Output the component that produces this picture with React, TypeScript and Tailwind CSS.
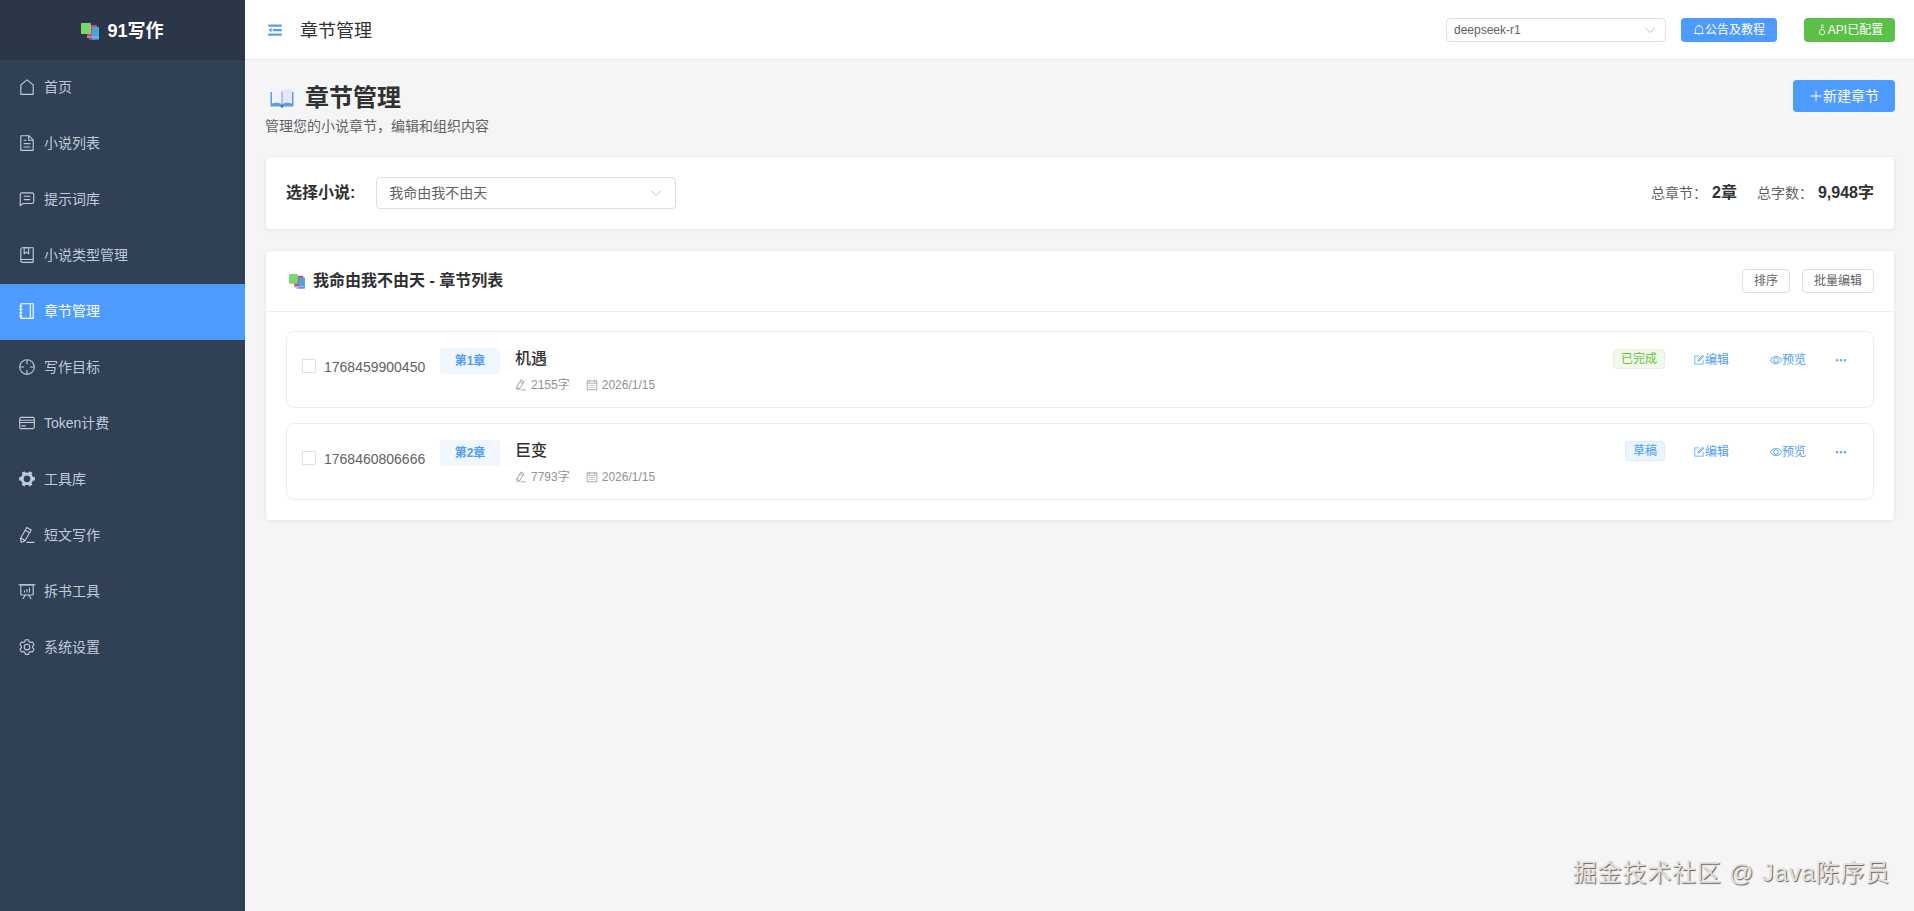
import { FC, ReactNode } from "react";

const FONT = "font-['Liberation_Sans','Noto_Sans_CJK_SC',sans-serif]";

const paths: { [key: string]: string[] } = {
  house: [
    "M192 413.952V896h640V413.952L512 147.328zM139.52 374.4l352-293.312a32 32 0 0 1 40.96 0l352 293.312A32 32 0 0 1 896 398.976V928a32 32 0 0 1-32 32H160a32 32 0 0 1-32-32V398.976a32 32 0 0 1 11.52-24.576",
  ],
  document: [
    "M832 384H576V128H192v768h640zm-26.496-64L640 154.496V320zM160 64h480l256 256v608a32 32 0 0 1-32 32H160a32 32 0 0 1-32-32V96a32 32 0 0 1 32-32m160 448h384v64H320zm0-192h160v64H320zm0 384h384v64H320z",
  ],
  chat: [
    "M160 826.88 273.536 736H800a64 64 0 0 0 64-64V256a64 64 0 0 0-64-64H224a64 64 0 0 0-64 64zM296 800 147.968 918.4A32 32 0 0 1 96 893.44V256a128 128 0 0 1 128-128h576a128 128 0 0 1 128 128v416a128 128 0 0 1-128 128z",
    "M352 512h320q32 0 32 32t-32 32H352q-32 0-32-32t32-32M352 320h320q32 0 32 32t-32 32H352q-32 0-32-32t32-32",
  ],
  collection: [
    "M192 736h640V128H256a64 64 0 0 0-64 64zm64-672h608a32 32 0 0 1 32 32v672a32 32 0 0 1-32 32H160l-32 57.536V192A128 128 0 0 1 256 64",
    "M240 800a48 48 0 1 0 0 96h592v-96zm0-64h656v160a64 64 0 0 1-64 64H240a112 112 0 0 1 0-224m144-608v250.88l96-76.8 96 76.8V128zm-64-64h320v381.44a32 32 0 0 1-51.968 24.96L480 384l-108.032 86.4A32 32 0 0 1 320 445.44z",
  ],
  notebook: [
    "M192 128v768h640V128zm-32-64h704a32 32 0 0 1 32 32v832a32 32 0 0 1-32 32H160a32 32 0 0 1-32-32V96a32 32 0 0 1 32-32",
    "M672 128h64v768h-64zM96 192h128q32 0 32 32t-32 32H96q-32 0-32-32t32-32m0 192h128q32 0 32 32t-32 32H96q-32 0-32-32t32-32m0 192h128q32 0 32 32t-32 32H96q-32 0-32-32t32-32m0 192h128q32 0 32 32t-32 32H96q-32 0-32-32t32-32",
  ],
  aim: [
    "M512 896a384 384 0 1 0 0-768 384 384 0 0 0 0 768m0 64a448 448 0 1 1 0-896 448 448 0 0 1 0 896",
    "M512 96a32 32 0 0 1 32 32v192a32 32 0 0 1-64 0V128a32 32 0 0 1 32-32m0 576a32 32 0 0 1 32 32v192a32 32 0 1 1-64 0V704a32 32 0 0 1 32-32M96 512a32 32 0 0 1 32-32h192a32 32 0 0 1 0 64H128a32 32 0 0 1-32-32m576 0a32 32 0 0 1 32-32h192a32 32 0 1 1 0 64H704a32 32 0 0 1-32-32",
  ],
  card: [
    "M896 324.096c0-42.368-2.496-55.296-9.536-68.48a52.352 52.352 0 0 0-22.144-22.08c-13.12-7.04-26.048-9.536-68.416-9.536H228.096c-42.368 0-55.296 2.496-68.48 9.536a52.352 52.352 0 0 0-22.08 22.144c-7.04 13.12-9.536 26.048-9.536 68.416v375.808c0 42.368 2.496 55.296 9.536 68.48a52.352 52.352 0 0 0 22.144 22.08c13.12 7.04 26.048 9.536 68.416 9.536h567.808c42.368 0 55.296-2.496 68.48-9.536a52.352 52.352 0 0 0 22.08-22.144c7.04-13.12 9.536-26.048 9.536-68.416zm64 0v375.808c0 57.088-5.952 77.76-17.088 98.56-11.136 20.928-27.52 37.312-48.384 48.448S852.928 864 795.968 864H228.032c-57.088 0-77.76-5.952-98.56-17.088a116.288 116.288 0 0 1-48.448-48.384c-11.136-20.864-17.024-41.6-17.024-98.56V324.032c0-57.088 5.952-77.76 17.088-98.56 11.136-20.928 27.52-37.312 48.384-48.448s41.6-17.024 98.56-17.024H795.84c57.088 0 77.76 5.952 98.56 17.088 20.928 11.136 37.312 27.52 48.448 48.384s17.088 41.6 17.088 98.56z",
    "M64 320h896v64H64zm0 128h896v64H64zm128 192h256v64H192z",
  ],
  tools: [
    "M764.416 254.72a351.68 351.68 0 0 1 86.336 149.184H960v192.064H850.752a351.68 351.68 0 0 1-86.336 149.312l54.72 94.72-166.272 96-54.592-94.72a352.64 352.64 0 0 1-172.48 0L371.136 936l-166.272-96 54.72-94.72a351.68 351.68 0 0 1-86.336-149.312H64v-192h109.248a351.68 351.68 0 0 1 86.336-149.312L204.8 160l166.208-96h.192l54.656 94.592a352.64 352.64 0 0 1 172.48 0L652.8 64h.128L819.2 160l-54.72 94.72zM704 499.968a192 192 0 1 0-384 0 192 192 0 0 0 384 0",
  ],
  pen: [
    "m199.04 672.64 193.984 112 224-387.968-193.92-112-224 388.032zm-23.872 60.16 32.896 148.288 144.896-45.696zM455.04 229.248l193.92 112 56.704-98.112-193.984-112zM104.32 708.8l384-665.024 304.768 175.936L409.152 884.8h.064l-248.448 78.336zm384 254.272v-64h448v64h-448z",
  ],
  board: [
    "M32 128h960v64H32z",
    "M192 192v512h640V192zm-64-64h768v576a64 64 0 0 1-64 64H192a64 64 0 0 1-64-64z",
    "M322.176 960H248.32l144.64-250.56 55.424 32zm453.888 0h-73.856L576 741.44l55.424-32z",
    "M340 470h60v130h-60zm140-70h60v200h-60zm140-70h60v270h-60z",
  ],
  setting: [
    "M600.704 64a32 32 0 0 1 30.464 22.208l35.2 109.376c14.784 7.232 28.928 15.36 42.432 24.512l112.384-24.192a32 32 0 0 1 34.432 15.36L944.32 364.8a32 32 0 0 1-4.032 37.504l-77.12 85.12a357.12 357.12 0 0 1 0 49.024l77.12 85.248a32 32 0 0 1 4.032 37.504l-88.704 153.6a32 32 0 0 1-34.432 15.296L708.8 803.904c-13.44 9.088-27.648 17.28-42.368 24.512l-35.264 109.376A32 32 0 0 1 600.704 960H423.296a32 32 0 0 1-30.464-22.208L357.696 828.48a351.616 351.616 0 0 1-42.56-24.64l-112.32 24.256a32 32 0 0 1-34.432-15.36L79.68 659.2a32 32 0 0 1 4.032-37.504l77.12-85.248a357.12 357.12 0 0 1 0-48.896l-77.12-85.248A32 32 0 0 1 79.68 364.8l88.704-153.6a32 32 0 0 1 34.432-15.296l112.32 24.256c13.568-9.152 27.776-17.408 42.56-24.64l35.2-109.312A32 32 0 0 1 423.232 64H600.64zm-23.424 64H446.72l-36.352 113.088-24.512 11.968a294.113 294.113 0 0 0-34.816 20.096l-22.656 15.36-116.224-25.088-65.28 113.152 79.68 88.192-1.92 27.136a293.12 293.12 0 0 0 0 40.192l1.92 27.136-79.808 88.192 65.344 113.152 116.224-25.024 22.656 15.296a294.113 294.113 0 0 0 34.816 20.096l24.512 11.968L446.72 896h130.688l36.48-113.152 24.448-11.904a288.282 288.282 0 0 0 34.752-20.096l22.592-15.296 116.288 25.024 65.28-113.152-79.744-88.192 1.92-27.136a293.12 293.12 0 0 0 0-40.256l-1.92-27.136 79.808-88.128-65.344-113.152-116.288 24.96-22.592-15.232a287.616 287.616 0 0 0-34.752-20.096l-24.448-11.904L577.344 128zM512 320a192 192 0 1 1 0 384 192 192 0 0 1 0-384m0 64a128 128 0 1 0 0 256 128 128 0 0 0 0-256",
  ],
  calendar: [
    "M128 384v512h768V192H768v32a32 32 0 1 1-64 0v-32H320v32a32 32 0 0 1-64 0v-32H128v128h768v64zm192-256h384V96a32 32 0 1 1 64 0v32h160a32 32 0 0 1 32 32v768a32 32 0 0 1-32 32H96a32 32 0 0 1-32-32V160a32 32 0 0 1 32-32h160V96a32 32 0 0 1 64 0zm-32 384h64a32 32 0 0 1 0 64h-64a32 32 0 0 1 0-64m0 192h64a32 32 0 1 1 0 64h-64a32 32 0 1 1 0-64m192-192h64a32 32 0 0 1 0 64h-64a32 32 0 0 1 0-64m0 192h64a32 32 0 1 1 0 64h-64a32 32 0 1 1 0-64m192-192h64a32 32 0 1 1 0 64h-64a32 32 0 1 1 0-64m0 192h64a32 32 0 1 1 0 64h-64a32 32 0 1 1 0-64",
  ],
  bell: [
    "M512 64a64 64 0 0 1 64 64v64H448v-64a64 64 0 0 1 64-64",
    "M256 768h512V448a256 256 0 1 0-512 0zm256-640a320 320 0 0 1 320 320v384H192V448a320 320 0 0 1 320-320",
    "M96 768h832q32 0 32 32t-32 32H96q-32 0-32-32t32-32m352 128h128a64 64 0 0 1-128 0",
  ],
  key: [
    "M448 456.064V96a32 32 0 0 1 32-32.064L672 64a32 32 0 0 1 0 64H512v128h160a32 32 0 0 1 0 64H512v128a256 256 0 1 1-64 8.064M512 896a192 192 0 1 0 0-384 192 192 0 0 0 0 384",
  ],
  plus: [
    "M480 480V128a32 32 0 0 1 64 0v352h352a32 32 0 0 1 0 64H544v352a32 32 0 1 1-64 0V544H128a32 32 0 0 1 0-64z",
  ],
  edit: [
    "M832 512a32 32 0 1 1 64 0v352a32 32 0 0 1-32 32H160a32 32 0 0 1-32-32V160a32 32 0 0 1 32-32h352a32 32 0 0 1 0 64H192v640h640z",
    "m469.952 554.24 52.8-7.552L847.104 222.4a32 32 0 1 0-45.248-45.248L477.44 501.44l-7.552 52.8zm422.4-422.4a96 96 0 0 1 0 135.808l-331.84 331.84a32 32 0 0 1-18.112 9.088L436.8 623.68a32 32 0 0 1-36.224-36.224l15.104-105.6a32 32 0 0 1 9.024-18.112l331.904-331.84a96 96 0 0 1 135.744 0z",
  ],
  view: [
    "M512 160c320 0 512 352 512 352S832 864 512 864 0 512 0 512s192-352 512-352m0 64c-225.28 0-384.128 208.064-436.8 288 52.608 79.872 211.456 288 436.8 288 225.28 0 384.128-208.064 436.8-288-52.608-79.872-211.456-288-436.8-288zm0 64a224 224 0 1 1 0 448 224 224 0 0 1 0-448m0 64a160.192 160.192 0 0 0-160 160c0 88.192 71.744 160 160 160s160-71.808 160-160-71.744-160-160-160",
  ],
  more: [
    "M176 416a112 112 0 1 1 0 224 112 112 0 0 1 0-224m336 0a112 112 0 1 1 0 224 112 112 0 0 1 0-224m336 0a112 112 0 1 1 0 224 112 112 0 0 1 0-224",
  ],
  arrowDown: [
    "M831.872 340.864 512 652.672 192.128 340.864a30.592 30.592 0 0 0-42.752 0 29.12 29.12 0 0 0 0 41.6L489.664 714.24a32 32 0 0 0 44.672 0l340.288-331.712a29.12 29.12 0 0 0 0-41.728 30.592 30.592 0 0 0-42.752 0z",
  ],
  fold: [
    "M896 192H128v128h768zm0 256H384v128h512zm0 256H128v128h768zM320 384 128 512l192 128z",
  ],
};

const Icon: FC<{ name: string; className?: string }> = ({ name, className }) => (
  <svg viewBox="0 0 1024 1024" className={`flex-none ${className ?? ""}`} fill="currentColor">
    {paths[name].map((d, i) => (
      <path key={i} d={d} />
    ))}
  </svg>
);

// the stack-of-books mark used in the logo and the list heading
const BooksMark: FC<{ className?: string }> = ({ className }) => (
  <svg viewBox="0 0 18 17" className={className}>
    <rect x="6" y="2" width="10" height="13" fill="#d8407c" />
    <rect x="11" y="4" width="7" height="12.5" fill="#45a5dd" />
    <rect x="6" y="13.5" width="12" height="1" fill="#a9b6e6" />
    <rect x="8" y="15.5" width="9" height="1" fill="#7f8fd8" />
    <rect x="0" y="0" width="10" height="11" rx="0.6" fill="#7ad66f" />
  </svg>
);

const OpenBook: FC<{ className?: string }> = ({ className }) => (
  <svg viewBox="0 0 24 20" className={className}>
    <path d="M0.5 4 H23.5 V18.5 H0.5 Z" fill="#5a9fe2" />
    <path d="M2 1.5 C5.5 0.5 9 0.5 11.5 2.5 V16 C9 14.5 5.5 14.5 2 15.5 Z" fill="#f1f2fc" />
    <path d="M22 1.5 C18.5 0.5 15 0.5 12.5 2.5 V16 C15 14.5 18.5 14.5 22 15.5 Z" fill="#e6e8f9" />
    <path d="M11.5 2.5 H12.5 V16.5 H11.5 Z" fill="#b9c1e0" />
    <rect x="10.8" y="17" width="2.4" height="2.5" fill="#2f6fb5" />
  </svg>
);

const navItems = [
  { icon: "house", label: "首页" },
  { icon: "document", label: "小说列表" },
  { icon: "chat", label: "提示词库" },
  { icon: "collection", label: "小说类型管理" },
  { icon: "notebook", label: "章节管理", active: true },
  { icon: "aim", label: "写作目标" },
  { icon: "card", label: "Token计费" },
  { icon: "tools", label: "工具库" },
  { icon: "pen", label: "短文写作" },
  { icon: "board", label: "拆书工具" },
  { icon: "setting", label: "系统设置" },
];

const chapters = [
  {
    id: "1768459900450",
    no: "第1章",
    title: "机遇",
    words: "2155字",
    date: "2026/1/15",
    status: "已完成",
    statusClass: "border-[#e1f3d8] bg-[#f0f9eb] text-[#67c23a]",
  },
  {
    id: "1768460806666",
    no: "第2章",
    title: "巨变",
    words: "7793字",
    date: "2026/1/15",
    status: "草稿",
    statusClass: "border-[#d9ecff] bg-[#ecf5ff] text-[#409eff]",
  },
];

const Sidebar = () => (
  <aside className="flex w-[245px] flex-none flex-col bg-[#304156]">
    <div className="flex h-[60px] flex-none items-center justify-center gap-2 bg-[#2b3649] pt-0.5 text-lg font-bold text-white">
      <BooksMark className="h-[17px] w-[18px]" />
      <span>91写作</span>
    </div>
    <nav className="flex flex-col">
      {navItems.map((item) => (
        <a
          key={item.label}
          className={`flex h-14 items-center gap-2 pb-0.5 pl-[18px] text-sm ${
            item.active ? "bg-[#4e9bff] text-white" : "text-[#bfcbd9]"
          }`}
        >
          <Icon name={item.icon} className="size-[18px]" />
          {item.label}
        </a>
      ))}
    </nav>
  </aside>
);

const Topbar = () => (
  <header className="flex h-[60px] flex-none items-center border-b border-[#e4e7ed] bg-white pl-[21px] pr-[19px]">
    <Icon name="fold" className="size-[18px] text-[#5b9fe8]" />
    <span className="ml-4 pt-0.5 text-lg text-[#303133]">章节管理</span>
    <div className="ml-auto flex h-6 w-[220px] items-center justify-between rounded border border-[#dcdfe6] pl-[7px] pr-2 text-xs text-[#606266]">
      deepseek-r1
      <Icon name="arrowDown" className="size-3.5 text-[#c0c4cc]" />
    </div>
    <button className="ml-[15px] flex h-6 w-24 items-center justify-center rounded bg-[#4e9bff] text-xs text-white">
      <Icon name="bell" className="size-3" />
      公告及教程
    </button>
    <button className="ml-[27px] flex h-6 w-[91px] items-center justify-center rounded bg-[#5cbf47] text-xs text-white">
      <Icon name="key" className="size-3" />
      API已配置
    </button>
  </header>
);

const Card: FC<{ className?: string; children: ReactNode }> = ({ className, children }) => (
  <section className={`rounded border border-[#e9ebf0] bg-white shadow-[0_1px_3px_rgba(0,0,0,0.04)] ${className ?? ""}`}>
    {children}
  </section>
);

const ChapterRow: FC<{ chapter: (typeof chapters)[number] }> = ({ chapter }) => (
  <div className="flex h-[77px] items-start rounded-lg border border-[#ebeef5] bg-white pl-[15px] pr-[26px] pt-4">
    <span className="mt-[11px] size-3.5 flex-none rounded-[1px] border border-[#dcdfe6] bg-white" />
    <span className="ml-2 mt-[9px] w-[116px] flex-none text-sm leading-5 text-[#606266]">{chapter.id}</span>
    <span className="flex h-[26px] w-[60px] flex-none items-center justify-center rounded bg-[#f0f7ff] text-xs font-bold text-[#4f9ef5]">
      {chapter.no}
    </span>
    <div className="ml-[15px] flex flex-col">
      <span className="text-base font-medium leading-[22px] text-[#303133]">{chapter.title}</span>
      <div className="mt-[7px] flex items-center text-xs leading-4 text-[#909399]">
        <Icon name="pen" className="size-3" />
        <span className="ml-1">{chapter.words}</span>
        <Icon name="calendar" className="ml-4 size-3" />
        <span className="ml-1">{chapter.date}</span>
      </div>
    </div>
    <span className={`ml-auto mt-px flex h-5 items-center rounded border px-[7px] text-xs ${chapter.statusClass}`}>
      {chapter.status}
    </span>
    <a className="ml-7 mt-[3px] flex items-center text-xs leading-[18px] text-[#4f9ef5]">
      <Icon name="edit" className="size-3" />
      编辑
    </a>
    <a className="ml-[41px] mt-[3px] flex items-center text-xs leading-[18px] text-[#4f9ef5]">
      <Icon name="view" className="size-3" />
      预览
    </a>
    <a className="ml-[29px] mt-[3px] flex h-[18px] items-center text-[#6ba9ee]">
      <Icon name="more" className="size-3" />
    </a>
  </div>
);

const ChapterPage = () => (
  <main className="flex flex-1 flex-col bg-[#f5f5f5] pl-5 pr-[19px] pt-5">
    <div className="flex items-start justify-between">
      <div>
        <h1 className="mt-0.5 flex items-center text-2xl font-bold leading-8 text-[#303133]">
          <OpenBook className="ml-[5px] mr-[11px] h-5 w-6" />
          章节管理
        </h1>
        <p className="mt-0.5 text-sm leading-5 text-[#606266]">管理您的小说章节，编辑和组织内容</p>
      </div>
      <button className="flex h-8 w-[102px] items-center justify-center rounded bg-[#4e9bff] text-sm text-white">
        <Icon name="plus" className="size-3.5" />
        新建章节
      </button>
    </div>

    <Card className="mt-5 flex h-[74px] items-center px-5">
      <span className="text-base font-bold text-[#303133]">选择小说:</span>
      <div className="ml-[21px] flex h-8 w-[300px] items-center justify-between rounded border border-[#dcdfe6] pl-3 pr-3 text-sm text-[#606266]">
        我命由我不由天
        <Icon name="arrowDown" className="size-3.5 text-[#c0c4cc]" />
      </div>
      <div className="ml-auto flex items-center text-sm text-[#606266]">
        <span>总章节：</span>
        <span className="ml-[5px] text-base font-bold text-[#303133]">2章</span>
        <span className="ml-5">总字数：</span>
        <span className="ml-[5px] text-base font-bold text-[#303133]">9,948字</span>
      </div>
    </Card>

    <Card className="mt-5">
      <div className="flex h-[61px] items-center border-b border-[#ebeef5] px-5">
        <BooksMark className="ml-[3px] h-[15px] w-4" />
        <span className="ml-2 text-base font-bold text-[#303133]">我命由我不由天 - 章节列表</span>
        <button className="ml-auto flex h-6 w-12 items-center justify-center rounded border border-[#dcdfe6] bg-white text-xs text-[#606266]">
          排序
        </button>
        <button className="ml-3 flex h-6 w-[72px] items-center justify-center rounded border border-[#dcdfe6] bg-white text-xs text-[#606266]">
          批量编辑
        </button>
      </div>
      <div className="flex flex-col gap-[15px] px-5 pb-5 pt-[19px]">
        {chapters.map((chapter) => (
          <ChapterRow key={chapter.id} chapter={chapter} />
        ))}
      </div>
    </Card>
  </main>
);

export default function App() {
  return (
    <div className={`relative flex h-[911px] overflow-hidden ${FONT}`}>
      <Sidebar />
      <div className="flex min-w-0 flex-1 flex-col">
        <Topbar />
        <ChapterPage />
      </div>
      <span className="absolute bottom-[22px] right-6 text-[24px] leading-8 tracking-[0.8px] text-[#e2e2e2] [text-shadow:1px_1px_1px_#5f5f5f]">
        掘金技术社区 @ Java陈序员
      </span>
    </div>
  );
}
